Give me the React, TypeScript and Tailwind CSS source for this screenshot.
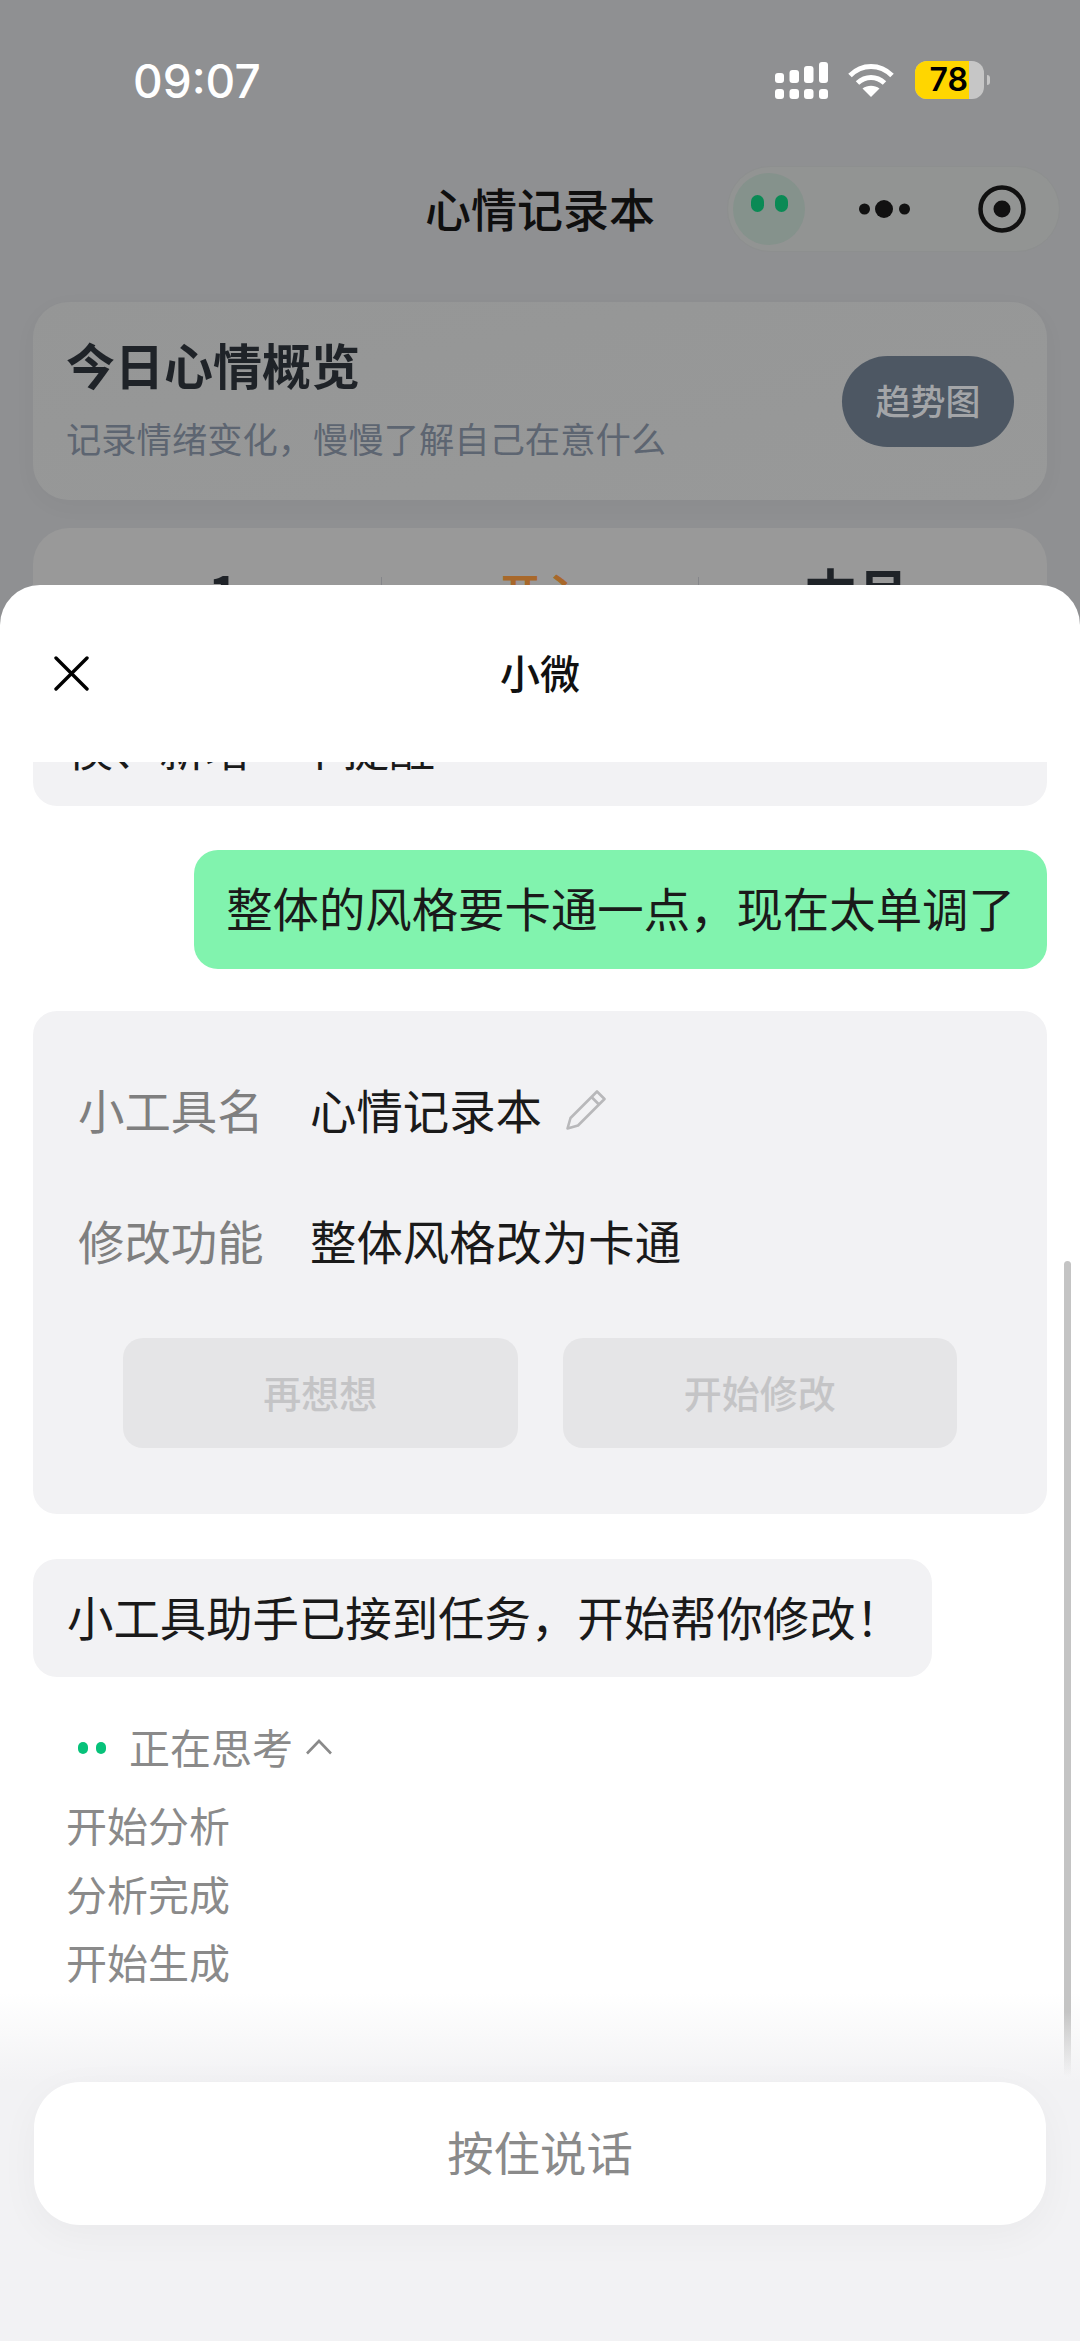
const cjk = "font-['Noto_Sans_CJK_SC','Noto_Sans',sans-serif]";

function SignalIcon() {
  return (
    <svg width="53" height="37" viewBox="0 0 53 37" fill="#fff">
      <rect x="0" y="11" width="9" height="10" rx="3" />
      <rect x="14.5" y="8" width="9.5" height="13" rx="3" />
      <rect x="29" y="4" width="9.5" height="17" rx="3" />
      <rect x="44" y="0" width="9" height="21" rx="3" />
      <rect x="0" y="27" width="9" height="10" rx="3" />
      <rect x="14.5" y="27" width="9.5" height="10" rx="3" />
      <rect x="29" y="27" width="9.5" height="10" rx="3" />
      <rect x="44" y="27" width="9" height="10" rx="3" />
    </svg>
  );
}

function WifiIcon() {
  return (
    <svg width="46" height="34" viewBox="0 0 46 34" fill="none">
      <path d="M2 12.5C14 0.5 32 0.5 44 12.5" stroke="#fff" strokeWidth="5" />
      <path d="M9.5 20C17.5 12.5 28.5 12.5 36.5 20" stroke="#fff" strokeWidth="5" />
      <path d="M14.5 25.5C19.5 21.8 26.5 21.8 31.5 25.5L23 34Z" fill="#fff" />
    </svg>
  );
}

function Battery() {
  return (
    <div className="flex items-center">
      <div className="flex h-[38px] w-[69px] overflow-hidden rounded-[12px] bg-[#c6c6c6]">
        <div className="flex w-[54px] items-center justify-end bg-[#ffd600] pr-[1px] font-['Inter',sans-serif] text-[32px] leading-none font-semibold text-black">
          78
        </div>
      </div>
      <div className="ml-[3px] h-[10px] w-[3px] rounded-r-full bg-[#c6c6c6]" />
    </div>
  );
}

function Capsule() {
  return (
    <div className="flex h-[86px] w-[333px] items-center rounded-full border border-[#8d8f8f] bg-[#929493] pl-[5px]">
      <div className="flex h-[72px] w-[72px] items-start justify-center gap-[11px] rounded-full bg-[#85928c] pt-[22px]">
        <span className="h-[17px] w-[13px] rounded-full bg-[#0a8a55]" />
        <span className="h-[17px] w-[13px] rounded-full bg-[#0a8a55]" />
      </div>
      <svg className="ml-[54px]" width="51" height="18" viewBox="0 0 51 18" fill="#111">
        <circle cx="5.5" cy="9" r="5.5" />
        <circle cx="25" cy="9" r="9" />
        <circle cx="45.5" cy="9" r="5.5" />
      </svg>
      <svg className="ml-[68px]" width="48" height="48" viewBox="0 0 48 48" fill="none">
        <circle cx="24" cy="24" r="21.5" stroke="#111" strokeWidth="4.5" />
        <circle cx="24" cy="24" r="8.5" fill="#111" />
      </svg>
    </div>
  );
}

function DimmedPage() {
  return (
    <div className="h-[585px] overflow-hidden bg-[#8f9092]">
      <div className="flex h-[166px] items-start justify-between pt-[56px] pr-[90px] pl-[133px]">
        <span className="font-['Inter',sans-serif] text-[46px] leading-[50px] font-medium text-white">09:07</span>
        <div className="flex items-center pt-[5px]">
          <SignalIcon />
          <div className="ml-[20px]">
            <WifiIcon />
          </div>
          <div className="ml-[21px]">
            <Battery />
          </div>
        </div>
      </div>

      <div className="relative flex h-[86px] items-center justify-center pb-[5px]">
        <span className="text-[46px] leading-none font-medium text-[#0f0f0f]">心情记录本</span>
        <div className="absolute top-0 right-[20px]">
          <Capsule />
        </div>
      </div>

      <div className="mx-[33px] mt-[50px] flex h-[198px] items-center justify-between rounded-[36px] bg-gradient-to-br from-[#959696] to-[#989999] pr-[33px] pl-[33px] shadow-[0_6px_24px_rgba(0,0,0,0.03)]">
        <div className="flex flex-col">
          <span className="-mt-[7px] text-[49px] leading-[60px] font-bold text-[#1f2328]">今日心情概览</span>
          <span className="mt-[21px] text-[35.3px] leading-[46px] text-[#5d6571]">记录情绪变化，慢慢了解自己在意什么</span>
        </div>
        <div className="flex h-[91px] w-[172px] items-center justify-center rounded-full bg-[#4d5763] pb-[2px] text-[35px] font-medium text-[#a3a5a8]">
          趋势图
        </div>
      </div>

      <div className="mx-[33px] mt-[28px] flex h-[120px] items-start rounded-t-[36px] bg-[#999999] px-[33px] pt-[32px]">
        <div className="flex w-[315px] justify-center text-[52px] leading-[62px] font-bold text-[#1f2328]">1</div>
        <div className="mt-[17px] h-[60px] w-px bg-[#85868a]" />
        <div className="flex w-[316px] justify-center text-[40px] leading-[62px] font-bold text-[#a8682a]">开心</div>
        <div className="mt-[17px] h-[60px] w-px bg-[#85868a]" />
        <div className="flex w-[315px] justify-center text-[52px] leading-[62px] font-bold text-[#1f2328]">本月</div>
      </div>
    </div>
  );
}

function ConfirmCard() {
  return (
    <div className="mt-[42px] flex h-[503px] flex-col rounded-[24px] bg-[#f2f2f4] px-[45px] pt-[66px]">
      <div className="flex h-[68px] items-center pb-[3px] text-[46.4px] leading-none">
        <span className="w-[232px] text-[#7f7f7f]">小工具名</span>
        <span className="text-[#1a1a1a]">心情记录本</span>
        <svg className="ml-[24px]" width="40" height="40" viewBox="0 0 40 40" fill="none" stroke="#b8b8ba" strokeWidth="2.6" strokeLinejoin="round">
          <path d="M31 1.5L38.5 9L12 35.5L1.5 38.5L4.5 28Z" />
          <path d="M25.5 7L33 14.5" />
        </svg>
      </div>
      <div className="mt-[63px] flex h-[68px] items-center pb-[3px] text-[46.4px] leading-none">
        <span className="w-[232px] text-[#7f7f7f]">修改功能</span>
        <span className="text-[#1a1a1a]">整体风格改为卡通</span>
      </div>
      <div className="mt-[62px] flex gap-[45px] px-[45px]">
        <div className="flex h-[110px] flex-1 items-center justify-center rounded-[20px] bg-[#e5e5e7] pb-[3px] text-[38px] font-medium text-[#c4c4c6]">再想想</div>
        <div className="flex h-[110px] flex-1 items-center justify-center rounded-[20px] bg-[#e5e5e7] pb-[3px] text-[38px] font-medium text-[#c4c4c6]">开始修改</div>
      </div>
    </div>
  );
}

function Thinking() {
  return (
    <div className="mt-[35px] flex flex-col text-[41px] text-[#8a8a8a]">
      <div className="flex h-[68px] items-center pl-[45px]">
        <span className="mt-[3px] h-[12px] w-[10px] rounded-full bg-[#07c27a]" />
        <span className="mt-[3px] ml-[8px] h-[12px] w-[10px] rounded-full bg-[#07c27a]" />
        <span className="ml-[23px] leading-none">正在思考</span>
        <svg className="mt-[2px] ml-[13px]" width="26" height="16" viewBox="0 0 26 16" fill="none" stroke="#8a8a8a" strokeWidth="2.6">
          <path d="M1 14.5L13 2L25 14.5" />
        </svg>
      </div>
      <div className="mt-[10px] flex flex-col pl-[33px] leading-[68.5px]">
        <span>开始分析</span>
        <span>分析完成</span>
        <span>开始生成</span>
      </div>
    </div>
  );
}

export default function App() {
  return (
    <div className={`relative h-[2341px] w-[1080px] overflow-hidden bg-[#8f9092] ${cjk}`}>
      <DimmedPage />

      <div className="absolute inset-x-0 top-[585px] bottom-0 flex flex-col overflow-hidden rounded-t-[40px] bg-white">
        <div className="relative flex h-[177px] shrink-0 items-center justify-center pb-[4px]">
          <svg className="absolute top-[71px] left-[54px]" width="35" height="35" viewBox="0 0 35 35" fill="none" stroke="#000" strokeWidth="3.4" strokeLinecap="round">
            <path d="M2 2L33 33M33 2L2 33" />
          </svg>
          <span className="text-[40px] leading-none font-medium text-[#111]">小微</span>
        </div>

        <div className="h-[1231px] shrink-0 overflow-hidden px-[33px]">
          <div className="-mt-[73px] flex h-[117px] items-center rounded-[24px] bg-[#f2f2f4] pr-[34px] pb-[4px] pl-[34px] text-[46px] leading-none text-[#1a1a1a]">
            模、新增一个提醒
          </div>
          <div className="mt-[44px] flex justify-end">
            <div className="flex h-[119px] w-[853px] items-center justify-center rounded-[24px] bg-[#81f3ae] pb-[5px] text-[46.4px] leading-none whitespace-nowrap text-[#1a1a1a]">
              整体的风格要卡通一点，现在太单调了
            </div>
          </div>
          <ConfirmCard />
          <div className="mt-[45px] flex h-[118px] w-[899px] items-center rounded-[24px] bg-[#f2f2f4] pb-[4px] pl-[34px] text-[46.4px] leading-none whitespace-nowrap text-[#1a1a1a]">
            小工具助手已接到任务，开始帮你修改！
          </div>
          <Thinking />
        </div>

        <div className="h-[89px] shrink-0 bg-gradient-to-b from-white to-[#f2f2f4]" />
        <div className="flex-1 bg-[#f2f2f4] px-[34px]">
          <div className="flex h-[143px] items-center justify-center rounded-[46px] bg-white pb-[5px] text-[46.4px] leading-none text-[#8a8a8a] shadow-[0_10px_40px_rgba(0,0,0,0.04)]">
            按住说话
          </div>
        </div>

        <div className="absolute top-[676px] right-[9px] h-[816px] w-[7px] rounded-full bg-gradient-to-b from-[#c4c4c4] via-[#c4c4c4] via-[92%] to-[#c4c4c4]/0" />
      </div>
    </div>
  );
}
